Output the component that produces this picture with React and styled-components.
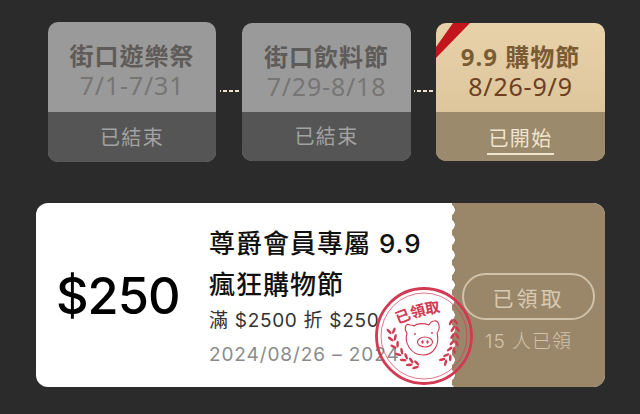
import React from "react";
import styled, { createGlobalStyle } from "styled-components";

const Global = createGlobalStyle`
  html, body { margin: 0; padding: 0; background: #2b2b2b; }
  body { width: 640px; height: 414px; overflow: hidden; font-family: "Noto Sans", "Noto Sans CJK TC", sans-serif; }
`;

const Page = styled.div`
  width: 640px;
  height: 414px;
  box-sizing: border-box;
  padding: 23px 35px 0 36px;
  display: flex;
  flex-direction: column;
  gap: 42px;
`;

const Track = styled.div`
  display: flex;
  align-items: center;
  height: 138px;
  padding-left: 12px;
`;

const Card = styled.div`
  position: relative;
  flex: none;
  width: ${p => (p.$first ? 168 : 169)}px;
  height: ${p => (p.$first ? 140 : 138)}px;
  margin-right: ${p => (p.$first ? 1 : 0)}px;
  border-radius: 10px;
  overflow: hidden;
  display: flex;
  flex-direction: column;
  background: ${p => (p.$active ? "linear-gradient(#e8d2aa, #d8bf94)" : "#9a9a9a")};
`;

const CardTop = styled.div`
  flex: 1;
  display: flex;
  flex-direction: column;
  align-items: center;
  justify-content: center;
  padding-top: 6px;
`;

const CardTitle = styled.div`
  font: 700 24px/30px "Noto Sans", "Noto Sans CJK TC", sans-serif;
  letter-spacing: 1px;
  color: ${p => (p.$active ? "#7b5c32" : "#5f5b59")};
`;

const CardDate = styled.div`
  font: 400 25px/28px "Noto Sans", "Noto Sans CJK TC", sans-serif;
  letter-spacing: 0.8px;
  color: ${p => (p.$active ? "#6e3f20" : "#777574")};
`;

const CardFoot = styled.div`
  height: ${p => (p.$first ? 50 : 49)}px;
  flex: none;
  display: flex;
  align-items: center;
  justify-content: center;
  padding-top: ${p => (p.$active ? 5 : 0)}px;
  box-sizing: border-box;
  background: ${p => (p.$active ? "#9b8a6c" : "#555")};
`;

const Status = styled.span`
  font: 400 20px/27px "Noto Sans CJK TC", sans-serif;
  letter-spacing: 1.4px;
  padding: 0 1px 2px;
  color: ${p => (p.$active ? "#efe5cf" : "#a2a2a2")};
  border-bottom: ${p => (p.$active ? "2px solid #efe5cf" : "none")};
`;

const Ribbon = styled.svg`
  position: absolute;
  left: 0;
  top: 0;
`;

const Connector = styled.div`
  flex: none;
  width: 25px;
  height: 2px;
  margin-top: -2px;
  background: repeating-linear-gradient(90deg, #eee3cb 0 4px, transparent 4px 6px);
  background-clip: content-box;
  padding: 0 3px;
  box-sizing: border-box;
`;

const Voucher = styled.div`
  position: relative;
  width: 569px;
  height: 184px;
  border-radius: 12px;
  overflow: hidden;
  background: #fff;
  display: flex;
  font-family: "Inter", "Noto Sans CJK TC", sans-serif;
`;

const Amount = styled.div`
  flex: none;
  width: 173px;
  padding-left: 20px;
  box-sizing: border-box;
  display: flex;
  align-items: center;
  font-size: 50.5px;
  font-weight: 500;
  letter-spacing: -1px;
  color: #000;
`;

const Info = styled.div`
  flex: 1;
  min-width: 0;
  padding-top: 20px;
  white-space: nowrap;
`;

const Title = styled.div`
  font-size: 26px;
  line-height: 41px;
  font-weight: 500;
  letter-spacing: 1px;
  color: #111;
`;

const Rule = styled.div`
  font-size: 19px;
  line-height: 24px;
  margin-top: 4px;
  letter-spacing: 0.7px;
  color: #333;
`;

const Dates = styled.div`
  font-size: 19px;
  line-height: 24px;
  margin-top: 10px;
  letter-spacing: 0.9px;
  color: #8b8b8b;
`;

const Side = styled.div`
  position: relative;
  flex: none;
  width: 153px;
  background: #9a876a;
  display: flex;
  flex-direction: column;
  align-items: center;
  padding-top: 70px;
  box-sizing: border-box;
  &::before {
    content: "";
    position: absolute;
    left: 0;
    top: 0;
    bottom: 0;
    width: 3px;
    background: radial-gradient(circle at -3px 7px, #fff 5.5px, transparent 6px) 0 0 / 3px 15px repeat-y;
  }
`;

const Claimed = styled.div`
  width: 133px;
  height: 47px;
  box-sizing: border-box;
  border: 2px solid #cfc2a8;
  border-radius: 24px;
  display: flex;
  align-items: center;
  justify-content: center;
  font: 400 21px "Noto Sans CJK TC", sans-serif;
  letter-spacing: 3px;
  color: #d6cab3;
`;

const Count = styled.div`
  margin-top: 9px;
  font: 300 19px/26px "Inter", "Noto Sans CJK TC", sans-serif;
  letter-spacing: 1px;
  color: #d0c3aa;
`;

const StampBox = styled.svg`
  position: absolute;
  left: 338px;
  top: 83px;
`;

const StampLabel = styled.text`
  font: 700 15px "Noto Sans CJK TC", sans-serif;
  fill: #d13a52;
`;

const leavesLeft = [
  [18, 48, 80], [20, 55, 70], [23, 62, 60], [28, 69, 48], [33, 74, 38], [39, 78, 25], [45, 80, 15]
];
const leavesRight = [
  [79, 33, -95], [81, 40, -92], [81, 47, -88], [81, 54, -80], [79, 61, -70], [76, 68, -55], [72, 73, -45]
];

const Leaf = ({ x, y, a }) => (
  <g transform={`translate(${x} ${y}) rotate(${a})`}>
    <ellipse cx="-3" cy="-2.4" rx="3.4" ry="1.3" transform="rotate(32 -3 -2.4)" />
    <ellipse cx="-3" cy="2.4" rx="3.4" ry="1.3" transform="rotate(-32 -3 2.4)" />
  </g>
);

const Stamp = () => (
  <StampBox width="100" height="100" viewBox="0 0 100 100">
    <circle cx="50" cy="50" r="47.5" fill="none" stroke="#d13a52" strokeWidth="2.8" />
    <circle cx="50" cy="50" r="43" fill="none" stroke="#d13a52" strokeWidth="0.7" />
    <path id="stampArc" d="M24 38 Q44 29 72 25" fill="none" />
    <StampLabel>
      <textPath href="#stampArc">已領取</textPath>
    </StampLabel>
    <g fill="none" stroke="#d13a52" strokeWidth="1.1" strokeLinejoin="round" strokeLinecap="round">
      <path d="M36 39 C31 36 30 44 33 47 C30 57 37 69 49 69 C60 69 66 58 63 47 C67 42 65 34 60 35 C58 35 56 37 55 39 C50 37 43 37 40 40 C39 39 37 39 36 39Z" />
      <ellipse cx="51" cy="56" rx="7.5" ry="5" />
    </g>
    <g fill="#d13a52">
      <ellipse cx="48.5" cy="56" rx="1.2" ry="1.7" />
      <ellipse cx="53.5" cy="56" rx="1.2" ry="1.7" />
      <circle cx="41" cy="48" r="0.9" />
      <circle cx="58" cy="47" r="0.9" />
      {leavesLeft.map(([x, y, a], i) => <Leaf key={i} x={x} y={y} a={a} />)}
      {leavesRight.map(([x, y, a], i) => <Leaf key={i} x={x} y={y} a={a} />)}
    </g>
  </StampBox>
);

const events = [
  { title: "街口遊樂祭", date: "7/1-7/31", status: "已結束", first: true },
  { title: "街口飲料節", date: "7/29-8/18", status: "已結束" },
  { title: "9.9 購物節", date: "8/26-9/9", status: "已開始", active: true }
];

export default function App() {
  return (
    <Page>
      <Global />
      <Track>
        {events.map((e, i) => (
          <React.Fragment key={e.title}>
            {i > 0 && <Connector />}
            <Card $first={e.first} $active={e.active}>
              {e.active && (
                <Ribbon width="36" height="36" viewBox="0 0 36 36">
                  <polygon points="17,0 34,0 0,35 0,24" fill="#c3161c" />
                </Ribbon>
              )}
              <CardTop>
                <CardTitle $active={e.active}>{e.title}</CardTitle>
                <CardDate $active={e.active}>{e.date}</CardDate>
              </CardTop>
              <CardFoot $first={e.first} $active={e.active}>
                <Status $active={e.active}>{e.status}</Status>
              </CardFoot>
            </Card>
          </React.Fragment>
        ))}
      </Track>
      <Voucher>
        <Amount>$250</Amount>
        <Info>
          <Title>尊爵會員專屬 9.9<br />瘋狂購物節</Title>
          <Rule>滿 $2500 折 $250</Rule>
          <Dates>2024/08/26 – 2024</Dates>
        </Info>
        <Side>
          <Claimed>已領取</Claimed>
          <Count>15 人已領</Count>
        </Side>
        <Stamp />
      </Voucher>
    </Page>
  );
}
